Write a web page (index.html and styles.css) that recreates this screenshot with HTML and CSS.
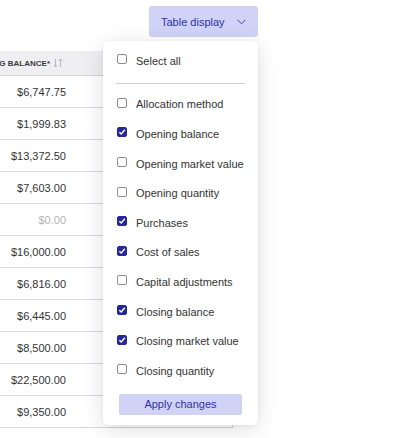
FILE: index.html
```html
<!DOCTYPE html>
<html>
<head>
<meta charset="utf-8">
<link rel="stylesheet" href="styles.css">
</head>
<body>
<div class="page">
  <div class="topbar">
    <button class="display-btn">Table display
      <svg class="chev" width="9" height="6" viewBox="0 0 9 6"><path d="M0.5 0.8 L4.5 4.8 L8.5 0.8" fill="none" stroke="#3a3eb0" stroke-width="1"/></svg>
    </button>
  </div>
  <div class="table">
    <div class="thead">
      <div class="cell hcell"><span class="htext">CLOSING BALANCE*</span>
        <svg class="sort" width="10" height="10" viewBox="0 0 10 10"><path d="M2.5 1 V9 M0.8 7 L2.5 9 L4.2 7 M7.5 9 V1 M5.8 3 L7.5 1 L9.2 3" fill="none" stroke="#b8b8bc" stroke-width="1"/></svg>
      </div>
      <div class="cell rest"></div>
    </div>
    <div class="row"><div class="cell">$6,747.75</div><div class="cell rest"></div></div>
    <div class="row"><div class="cell">$1,999.83</div><div class="cell rest"></div></div>
    <div class="row"><div class="cell">$13,372.50</div><div class="cell rest"></div></div>
    <div class="row"><div class="cell">$7,603.00</div><div class="cell rest"></div></div>
    <div class="row"><div class="cell muted">$0.00</div><div class="cell rest"></div></div>
    <div class="row"><div class="cell">$16,000.00</div><div class="cell rest"></div></div>
    <div class="row"><div class="cell">$6,816.00</div><div class="cell rest"></div></div>
    <div class="row"><div class="cell">$6,445.00</div><div class="cell rest"></div></div>
    <div class="row"><div class="cell">$8,500.00</div><div class="cell rest"></div></div>
    <div class="row"><div class="cell">$22,500.00</div><div class="cell rest"></div></div>
    <div class="row"><div class="cell">$9,350.00</div><div class="cell rest"></div></div>
  </div>

  <div class="menu">
    <label class="item"><span class="box"></span>Select all</label>
    <div class="divider"></div>
    <label class="item"><span class="box"></span>Allocation method</label>
    <label class="item"><span class="box on"><svg width="8" height="8" viewBox="0 0 8 8"><path d="M1.3 4.2 L3.2 6 L6.8 1.8" fill="none" stroke="#fff" stroke-width="1.4"/></svg></span>Opening balance</label>
    <label class="item"><span class="box"></span>Opening market value</label>
    <label class="item"><span class="box"></span>Opening quantity</label>
    <label class="item"><span class="box on"><svg width="8" height="8" viewBox="0 0 8 8"><path d="M1.3 4.2 L3.2 6 L6.8 1.8" fill="none" stroke="#fff" stroke-width="1.4"/></svg></span>Purchases</label>
    <label class="item"><span class="box on"><svg width="8" height="8" viewBox="0 0 8 8"><path d="M1.3 4.2 L3.2 6 L6.8 1.8" fill="none" stroke="#fff" stroke-width="1.4"/></svg></span>Cost of sales</label>
    <label class="item"><span class="box"></span>Capital adjustments</label>
    <label class="item"><span class="box on"><svg width="8" height="8" viewBox="0 0 8 8"><path d="M1.3 4.2 L3.2 6 L6.8 1.8" fill="none" stroke="#fff" stroke-width="1.4"/></svg></span>Closing balance</label>
    <label class="item"><span class="box on"><svg width="8" height="8" viewBox="0 0 8 8"><path d="M1.3 4.2 L3.2 6 L6.8 1.8" fill="none" stroke="#fff" stroke-width="1.4"/></svg></span>Closing market value</label>
    <label class="item"><span class="box"></span>Closing quantity</label>
    <button class="apply">Apply changes</button>
  </div>
</div>
</body>
</html>
```

FILE: styles.css
```css
html, body {
  margin: 0;
  padding: 0;
  background: #ffffff;
  font-family: "Liberation Sans", Arial, sans-serif;
  color: #333333;
}

.page {
  position: relative;
  width: 394px;
  height: 438px;
  overflow: hidden;
}

.topbar {
  height: 51px;
  display: flex;
  align-items: flex-start;
  padding-top: 6px;
  padding-left: 149px;
  box-sizing: border-box;
}

.display-btn {
  width: 109px;
  height: 31px;
  border: none;
  border-radius: 3px;
  background: #d0d2f6;
  color: #2f33a6;
  font-family: "Liberation Sans", Arial, sans-serif;
  font-size: 11px;
  display: flex;
  align-items: center;
  padding: 0 0 0 12px;
  gap: 0;
}

.chev {
  margin-left: 12px;
  margin-top: 1px;
}

.table {
  width: 233px;
  border-right: 1px solid #d4d4d8;
  box-sizing: border-box;
}

.thead, .row {
  display: flex;
}

.thead {
  height: 25px;
  background: #efeff1;
  border-bottom: 1px solid #d2d2d8;
  box-sizing: border-box;
}

.row {
  height: 32px;
  border-bottom: 1px solid #d6d6dc;
  box-sizing: border-box;
}

.cell {
  width: 78px;
  flex: none;
  display: flex;
  align-items: center;
  justify-content: flex-end;
  padding-right: 12px;
  box-sizing: border-box;
  font-size: 11px;
  white-space: nowrap;
  color: #333333;
}

.cell.rest {
  flex: 1;
  width: auto;
  padding: 0;
}

.muted {
  color: #b3b3b8;
}

.hcell {
  padding-right: 15px;
}

.htext {
  font-size: 8px;
  font-weight: bold;
  color: #3a3a3e;
  letter-spacing: 0;
}

.sort {
  margin-left: 3px;
  flex: none;
}

.menu {
  position: absolute;
  left: 103px;
  top: 41px;
  width: 155px;
  height: 384px;
  background: #ffffff;
  border-radius: 5px;
  box-shadow: 0 4px 22px rgba(0, 0, 0, 0.13), 0 1px 4px rgba(0, 0, 0, 0.05);
  box-sizing: border-box;
  padding: 5px 0 0 0;
  display: flex;
  flex-direction: column;
}

.item {
  height: 29.6px;
  flex: none;
  display: flex;
  align-items: center;
  padding-left: 14px;
  font-size: 11px;
  color: #333333;
  white-space: nowrap;
}

.box {
  width: 10px;
  height: 10px;
  box-sizing: border-box;
  border: 1px solid #8c8c90;
  border-radius: 2px;
  background: #ffffff;
  margin-right: 9px;
  margin-top: -3px;
  display: flex;
  align-items: center;
  justify-content: center;
  flex: none;
}

.box.on {
  background: #26289a;
  border-color: #26289a;
}

.divider {
  height: 1px;
  background: #cfcfd4;
  margin: 7px 13px 6px 13px;
  flex: none;
}

.apply {
  margin: 8px 16px 0 16px;
  height: 21px;
  border: none;
  border-radius: 2px;
  background: #d0d2f6;
  color: #2f33a6;
  font-family: "Liberation Sans", Arial, sans-serif;
  font-size: 11px;
  padding: 0;
  flex: none;
}
```
